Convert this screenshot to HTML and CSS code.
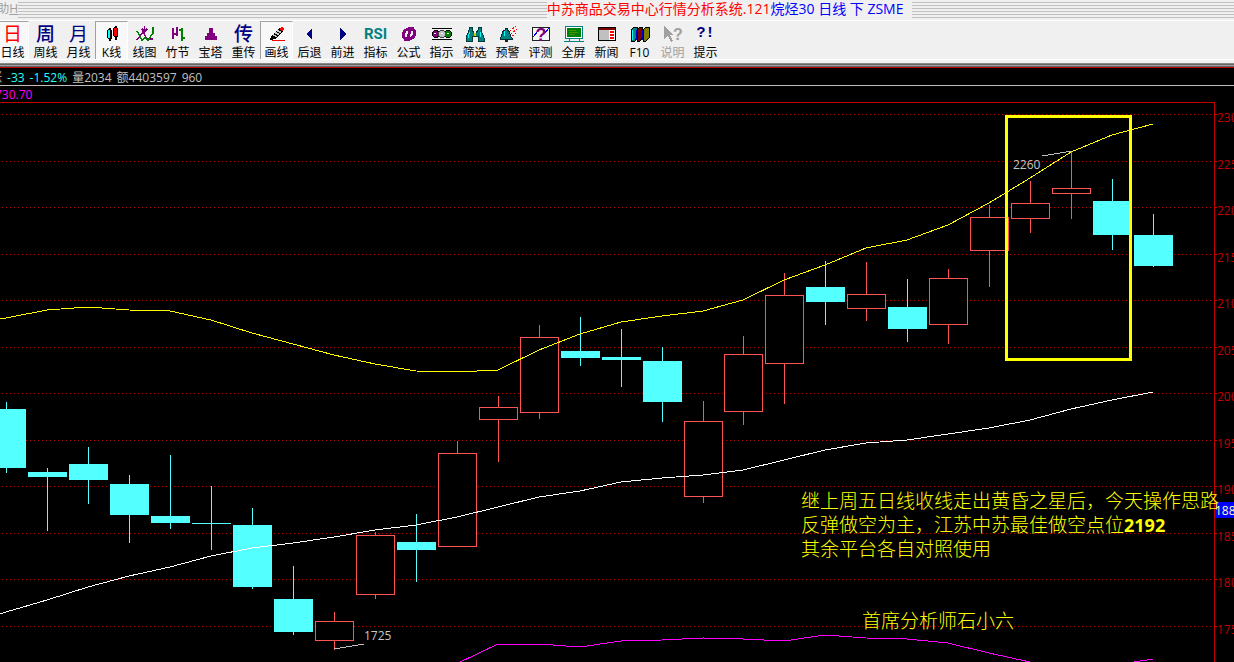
FILE: index.html
```html
<!DOCTYPE html>
<html lang="zh-CN">
<head>
<meta charset="utf-8">
<title>中苏商品交易中心行情分析系统</title>
<link rel="stylesheet" href="styles.css">
</head>
<body>
<header class="titlebar">
  <span class="menu">助<u>H</u></span>
  <span class="grip grip-left"></span>
  <h1 class="title">中苏商品交易中心行情分析系统.121<span class="symbol">烷烃30 日线 下 ZSME</span></h1>
  <span class="grip grip-right"></span>
</header>

<nav class="toolbar">
  <button class="tool pressed"><span class="glyph red">日</span>日线</button>
  <button class="tool"><span class="glyph heavy">周</span>周线</button>
  <button class="tool"><span class="glyph">月</span>月线</button>
  <button class="tool pressed"><svg class="icon" viewBox="0 0 20 18"><path d="M8 3V16M14 1V15" stroke="#000" stroke-width="2"/><path d="M6 4H9V5H10V14H6V13H5V5H6ZM12 2H15V3H16V12H12V11H11V3H12Z" fill="#000"/><path d="M6 5H8V13H6Z" fill="#0ff"/><path d="M12 3H15V11H12Z" fill="#f00"/></svg>K线</button>
  <button class="tool"><svg class="icon" viewBox="0 0 20 18"><path d="M2 15L8 7L12 14H18M9.500 1V6M7 4L9.500 6.500L12 4" fill="none" stroke="#800080" stroke-width="1.500"/><path d="M2 6L7 15L10 13L13 15L18 8V2" fill="none" stroke="#008000" stroke-width="1.500"/></svg>线图</button>
  <button class="tool"><svg class="icon" viewBox="0 0 20 18"><path d="M5 3V14M5 9H8M9 2V11" fill="none" stroke="#800080" stroke-width="2"/><path d="M11 5H15M14 3V16M14 13H17" fill="none" stroke="#008000" stroke-width="2"/></svg>竹节</button>
  <button class="tool"><svg class="icon" viewBox="0 0 20 18"><path d="M8 3H12V8H14V11H16V15H4V11H6V8H8Z" fill="#800080"/></svg>宝塔</button>
  <button class="tool"><span class="glyph heavy">传</span>重传</button>
  <button class="tool pressed"><svg class="icon" viewBox="0 0 20 18"><path d="M3 15L4 11L12 3L16 7L8 14Z" fill="#000"/><path d="M6 11L12 5M8 12L14 6" stroke="#ccc" stroke-width="1.500" stroke-dasharray="2 1"/><path d="M12 4L15 2L17 4L15 7Z" fill="#f00"/><path d="M5 15.500H18" stroke="#f00"/></svg>画线</button>
  <button class="tool"><svg class="icon" viewBox="0 0 20 18"><path d="M12 3V15L6 9Z" fill="#000080"/></svg>后退</button>
  <button class="tool"><svg class="icon" viewBox="0 0 20 18"><path d="M7 3V15L13 9Z" fill="#000080"/></svg>前进</button>
  <button class="tool"><span class="glyph rsi">RSI</span>指标</button>
  <button class="tool"><svg class="icon" viewBox="0 0 20 18"><ellipse cx="10" cy="9" rx="6" ry="5" transform="rotate(-25 10 9)" fill="none" stroke="#800080" stroke-width="3"/><path d="M12 2L8 16" stroke="#800080" stroke-width="3"/><path d="M9 2.500H15M5 15.500H11" stroke="#800080"/></svg>公式</button>
  <button class="tool"><svg class="icon wide" viewBox="0 0 22 18"><path d="M1 3.500H21M1 14.500H21" stroke="#000"/><circle cx="5" cy="9" r="4" fill="#000"/><circle cx="11" cy="9" r="4" fill="#444"/><circle cx="17" cy="9" r="4" fill="#000"/><circle cx="4.500" cy="9" r="3" fill="#800080"/><circle cx="11" cy="9" r="3" fill="#c0c0c0"/><circle cx="17" cy="9" r="3" fill="#008000"/><path d="M3 8H5M10 8H12M16 8H18" stroke="#fff"/></svg>指示</button>
  <button class="tool"><svg class="icon wide" viewBox="0 0 22 18"><path d="M5 2H8V5L10 8H12L14 5V2H17V5L20 13V16H14V11H8V16H2V13L5 5Z" fill="#008080" stroke="#003c3c"/><path d="M5.500 7L4 13M16 7V12" stroke="#0ff"/><path d="M10 8H12V11H10Z" fill="#cc0"/></svg>筛选</button>
  <button class="tool"><svg class="icon" viewBox="0 0 20 18"><path d="M7 3H9V5C13 6 11 11 14 13V14H2V13C5 11 3 6 7 5Z" fill="#008080" stroke="#003030"/><path d="M6.500 6L6 11" stroke="#0ff"/><path d="M7 15H10V17H7Z" fill="#222"/><path d="M12 6L18 1M13 9L19 4M14 11L19 8" stroke="#f00" stroke-dasharray="2 1"/></svg>预警</button>
  <button class="tool"><svg class="icon" viewBox="0 0 20 18"><rect x="1.500" y="2.500" width="17" height="13" fill="#f6f6f6" stroke="#222"/><path d="M2 12L7 6M13 9L18 3" fill="none" stroke="#00f"/><text class="query" x="10" y="16">?</text></svg>评测</button>
  <button class="tool"><svg class="icon" viewBox="0 0 20 18"><rect x="1.500" y="1.500" width="17" height="12" fill="#fff" stroke="#008080"/><rect x="3" y="3" width="14" height="9" fill="#008000"/><path d="M5 5.500H12M5 7.500H14M5 9.500H11" stroke="#4a9000"/><path d="M5 14V16M15 14V16M0 16.500H20" stroke="#008080"/></svg>全屏</button>
  <button class="tool"><svg class="icon" viewBox="0 0 20 18"><rect x="1.500" y="2.500" width="17" height="13" fill="#c0c0c0" stroke="#000"/><path d="M2 4H18" stroke="#800000" stroke-width="2"/><rect x="12" y="5" width="6" height="10" fill="#fff"/><path d="M13 7H17M13 10H17M13 13H17" stroke="#f00" stroke-width="2"/></svg>新闻</button>
  <button class="tool"><svg class="icon" viewBox="0 0 20 18"><path d="M1 5L4 2H7V13L5 16H1Z" fill="#008080" stroke="#000"/><path d="M2.500 5V15" stroke="#0ff"/><path d="M7 5L10 2H12V13L10 16H7Z" fill="#800000" stroke="#000"/><path d="M13 5L16 2H19V13L16 16H13Z" fill="#808000" stroke="#000"/><path d="M6 5V15M12 5V15" stroke="#00c"/></svg>F10</button>
  <button class="tool" disabled><svg class="icon wide" viewBox="0 0 22 18"><path d="M2 1L12 10H8L11 16L9 17L6 11L2 14Z" fill="#a0a0a0"/><text class="query muted" x="16" y="15">?</text></svg>说明</button>
  <button class="tool"><span class="glyph mark">?!</span>提示</button>
</nav>
<div class="frame"></div>

<main class="board">
  <p class="quote"><span>涨</span><span class="down">-33</span><span class="down">-1.52%</span><span>量2034</span><span>额4403597</span><span>960</span></p>
  <p class="average">730.70</p>
  <section class="chart">
    <svg class="plot" viewBox="0 102 1234 560" preserveAspectRatio="xMinYMin slice" role="img" aria-label="烷烃30 日线">
      <path class="grid" d="M2 114.500H1214M2 161.500H1214M2 207.500H1214M2 254.500H1214M2 300.500H1214M2 347.500H1214M2 393.500H1214M2 440.500H1214M2 486.500H1214M2 533.500H1214M2 579.500H1214M2 626.500H1214"/>
      <path class="axis" d="M0 102.500H1214.500V662M1215 114.500H1217M1215 161.500H1217M1215 207.500H1217M1215 254.500H1217M1215 300.500H1217M1215 347.500H1217M1215 393.500H1217M1215 440.500H1217M1215 486.500H1217M1215 533.500H1217M1215 579.500H1217M1215 626.500H1217"/>
      <path class="rise" d="M315.500 621.500h38v19h-38zM356.500 535.500h38v59h-38zM438.500 453.500h38v93h-38zM479.500 407.500h38v12h-38zM520.500 337.500h38v75h-38zM684.500 421.500h38v75h-38zM724.500 354.500h38v57h-38zM765.500 295.500h38v68h-38zM847.500 294.500h38v14h-38zM929.500 278.500h38v46h-38zM970.500 217.500h38v33h-38zM1011.500 203.500h38v15h-38zM1052.500 188.500h38v5h-38z"/>
      <path class="rise" d="M334.500 612V621M334.500 641V650M375.500 532V535M375.500 595V599M457.500 441V453M498.500 396V407M498.500 420V462M539.500 325V337M539.500 413V419M703.500 401V421M703.500 497V503M743.500 336V354M743.500 412V425M784.500 273V295M784.500 364V404M866.500 262V294M866.500 309V321M948.500 269V278M948.500 325V344M989.500 205V217M989.500 251V287M1030.500 181V203M1030.500 219V233M1071.500 152V188M1071.500 194V219"/>
      <path class="fall" d="M-13 409h39v59h-39zM28 472h39v5h-39zM69 464h39v16h-39zM110 484h39v31h-39zM151 516h39v7h-39zM192 523h39v1h-39zM233 525h39v62h-39zM274 599h39v33h-39zM397 542h39v8h-39zM561 351h39v7h-39zM602 357h39v3h-39zM643 361h39v41h-39zM806 287h39v15h-39zM888 307h39v22h-39zM1093 201h39v34h-39zM1134 235h39v31h-39z"/>
      <path class="fall-wick" d="M6.500 402V473M47.500 468V531M88.500 447V504M129.500 475V543M170.500 455V529M211.500 486V550M252.500 508V589M293.500 566V635M416.500 514V582M580.500 317V366M621.500 329V387M662.500 347V422M825.500 261V325M907.500 279V342M1112.500 179V250M1153.500 214V267"/>
      <polyline class="line upper" points="0,319 6,318 47,310 88,307 129,310 170,311 211,320 252,333 293,344 334,355 375,364 416,371 457,372 498,370 539,350 580,334 621,322 662,316 703,311 743,300 784,280 825,265 866,248 907,240 948,225 989,203 1030,178 1071,152 1112,135 1153,124"/>
      <polyline class="line middle" points="0,614 6,612 47,600 88,587 129,576 170,567 211,556 252,548 293,543 334,537 375,530 416,525 457,517 498,507 539,497 580,491 621,482 662,478 703,475 743,470 784,460 825,450 866,443 907,440 948,434 989,428 1030,420 1071,409 1112,400 1153,392"/>
      <path class="line lower" d="M458 663L498 644H539L580 647L621 641L662 640L703 638L743 639L784 641L825 635L866 638L907 639L948 643L989 653L1030 662M1134 662L1153 659"/>
      <path class="line leader" d="M334 649L364 644M1042 156L1072 151"/>
      <text class="tag" x="364" y="640">1725</text>
      <text class="tag" x="1013" y="169">2260</text>
      <rect class="highlight" x="1006.500" y="116.500" width="124" height="243"/>
      <g class="scale">
        <text x="1217" y="122">2300</text><text x="1217" y="169">2250</text><text x="1217" y="215">2200</text><text x="1217" y="262">2150</text><text x="1217" y="308">2100</text><text x="1217" y="355">2050</text><text x="1217" y="401">2000</text><text x="1217" y="448">1950</text><text x="1217" y="494">1900</text><text x="1217" y="541">1850</text><text x="1217" y="587">1800</text><text x="1217" y="634">1750</text>
      </g>
      <rect x="1215" y="502" width="40" height="16" fill="#00f"/>
      <text class="last" x="1215" y="515">1885</text>
    </svg>
    <p class="note advice">继上周五日线收线走出黄昏之星后，今天操作思路<br>反弹做空为主，江苏中苏最佳做空点位<b>2192</b><br>其余平台各自对照使用</p>
    <p class="note author">首席分析师石小六</p>
  </section>
</main>
</body>
</html>
```
FILE: styles.css
```css
* { box-sizing: border-box; }

body {
  margin: 0;
  height: 100vh;
  display: flex;
  flex-direction: column;
  overflow: hidden;
  background: #000;
  font: 12px "Open Sans", "Noto Sans CJK SC", sans-serif;
}

p, h1 { margin: 0; }

.titlebar {
  display: flex;
  flex: none;
  height: 21px;
  background: #f0f0f0;
  border-bottom: 1px solid #fff;
  line-height: 18px;
  white-space: nowrap;
}

.menu {
  display: flex;
  justify-content: flex-end;
  width: 18px;
  overflow: hidden;
  color: #a0a0a0;
}

.grip {
  height: 16px;
  margin-top: 2px;
  background: repeating-linear-gradient(#c0c0c0 0 1px, #f0f0f0 1px 3px);
}
.grip-left { flex: 528; }
.grip-right { flex: 322; }

.title {
  padding-right: 8px;
  color: #f00;
  font-size: 14px;
  font-weight: 400;
}
.symbol { color: #00f; }

.toolbar {
  display: flex;
  flex: none;
  height: 39px;
  padding-right: 4px;
  background: #f0f0f0;
  border-bottom: 1px solid #fff;
  overflow: hidden;
}

.tool {
  display: flex;
  flex: none;
  flex-direction: column;
  gap: 2px;
  align-items: center;
  width: 33px;
  height: 38px;
  padding: 3px 0 0;
  border: 1px solid transparent;
  border-bottom: 0;
  background: none;
  color: #000;
  font: inherit;
  line-height: 16px;
  white-space: nowrap;
}
.tool:first-child { margin-left: -4px; }
.tool:disabled { color: #a0a0a0; }
.pressed {
  border-color: #a0a0a0 #fff #fff #a0a0a0;
  background: #f8f8f8;
}

.icon { flex: none; width: 20px; height: 18px; shape-rendering: crispEdges; }
.wide { width: 22px; }

.glyph {
  flex: none;
  height: 18px;
  color: #000080;
  font-size: 19px;
  font-weight: 400;
  line-height: 18px;
}
.heavy { font-weight: 500; }
.red { color: #f00; }
.mark { font: 700 15px/18px "Liberation Mono", monospace; }
.rsi { color: #008080; font: 700 15px/18px Roboto, sans-serif; }
.query { fill: #800080; font: 700 18px "Liberation Sans", sans-serif; text-anchor: middle; }
.muted { fill: #a0a0a0; font-size: 16px; }

.frame {
  flex: none;
  height: 8px;
  background: linear-gradient(#f0f0f0 0 3px, #888 3px 4px, #666 4px 5px, #a0a0a0 5px 6px, #606060 6px 7px, #c00000 7px);
}

.board {
  display: flex;
  flex: 1;
  flex-direction: column;
  min-height: 0;
  background: #000;
}

.quote {
  display: flex;
  gap: 5px;
  height: 18px;
  padding-left: 1px;
  margin-left: -11px;
  border-bottom: 1px solid #c0c0c0;
  color: #c0c0c0;
  line-height: 19px;
  white-space: nowrap;
}
.down { color: #2ff; }

.average {
  height: 16px;
  color: #f0f;
  line-height: 17px;
  text-indent: -5px;
}

.chart {
  position: relative;
  flex: 1;
  min-height: 0;
  overflow: hidden;
}
.plot { display: block; width: 100%; height: 100%; shape-rendering: crispEdges; }

.grid { fill: none; stroke: #c00000; stroke-dasharray: 1 3; }
.axis { fill: none; stroke: #c00000; }
.rise { fill: #000; stroke: #ff5454; }
.fall { fill: #54ffff; }
.fall-wick { stroke: #54ffff; }
.line { fill: none; stroke-width: 1; }
.upper { stroke: #ff0; }
.middle { stroke: #fff; }
.lower { stroke: #f0f; }
.leader { stroke: #c0c0c0; }
.highlight { fill: none; stroke: #ff0; stroke-width: 3; }
.tag { fill: #c8c8c8; }
.scale { fill: #c00000; }
.last { fill: #ffffc0; }

.note {
  position: absolute;
  color: #ff0;
  font-size: 19px;
  font-weight: 300;
  line-height: 24px;
  white-space: nowrap;
}
.note b { font-size: 18px; font-weight: 700; line-height: 1; }
.advice { left: 801px; top: 387px; }
.author { left: 862px; top: 507px; }
```
